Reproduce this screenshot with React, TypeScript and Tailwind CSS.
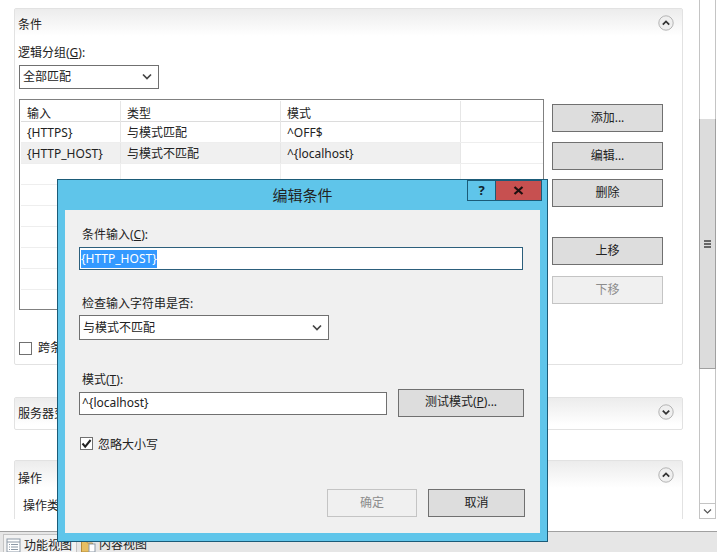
const rows = [
  { input: '{HTTPS}', type: '与模式匹配', pattern: '^OFF$' },
  { input: '{HTTP_HOST}', type: '与模式不匹配', pattern: '^{localhost}', active: true },
];

function Chevron({ up }: { up?: boolean }) {
  return (
    <svg width="16" height="16" viewBox="0 0 16 16" className="shrink-0">
      <circle cx="8" cy="8" r="7.2" fill="#efefef" stroke="#b4b4b4" />
      <path d={up ? 'M4.8 9.6 8 6.4l3.2 3.2' : 'M4.8 6.6 8 9.8l3.2-3.2'} fill="none" stroke="#333" strokeWidth="1.8" />
    </svg>
  );
}

function SelectBox({ label, className }: { label: string; className: string }) {
  return (
    <div className={`flex items-center justify-between bg-white border border-[#707070] pl-[3px] pr-[6px] ${className}`}>
      <span>{label}</span>
      <svg width="10" height="8" viewBox="0 0 10 8">
        <path d="M1 1.5 5 5.5l4-4" fill="none" stroke="#444" strokeWidth="1.7" />
      </svg>
    </div>
  );
}

function Btn({ children, className, disabled }: { children: React.ReactNode; className: string; disabled?: boolean }) {
  return (
    <div
      className={`flex items-center justify-center border ${
        disabled ? 'bg-[#f0f0f0] border-[#c4c4c4] text-[#8c8c8c]' : 'bg-[#dddddd] border-[#707070] text-[#222]'
      } ${className}`}
    >
      {children}
    </div>
  );
}

function Panel({ title, titleClass, className, children, up }: { title: string; titleClass: string; className: string; children?: React.ReactNode; up?: boolean }) {
  return (
    <section className={`border border-[#e2e2e2] rounded-[2px] ${className}`}>
      <div className="flex items-center justify-between h-[27px] pl-[3px] pr-[8px] bg-gradient-to-b from-[#ececec] to-white">
        <span className={titleClass}>{title}</span>
        <Chevron up={up} />
      </div>
      {children}
    </section>
  );
}

function ConditionTable() {
  const cell = 'pl-[6px] border-r border-[#e6e6e6] flex items-center';
  return (
    <div className="w-[525px] h-[211px] border border-[#808080] pt-[1px] pl-[1px] bg-white overflow-hidden">
      <div className="grid grid-cols-[100px_160px_180px_1fr] h-[21px] border-b border-[#dcdcdc]">
        <div className={`${cell} pt-[4px]`}>输入</div>
        <div className={`${cell} pt-[4px]`}>类型</div>
        <div className={`${cell} pt-[4px]`}>模式</div>
        <div />
      </div>
      {rows.map((r) => (
        <div key={r.input} className="grid grid-cols-[100px_160px_180px_1fr] h-[21px] border-b border-[#eeeeee]">
          <div className={`${cell} pt-[2px] ${r.active ? 'bg-[#f0f0f0]' : ''}`}>{r.input}</div>
          <div className={`${cell} pt-[2px] ${r.active ? 'bg-[#f0f0f0]' : ''}`}>{r.type}</div>
          <div className={`${cell} pt-[2px] ${r.active ? 'bg-[#f0f0f0]' : ''}`}>{r.pattern}</div>
          <div />
        </div>
      ))}
      {[0, 1, 2, 3, 4, 5].map((i) => (
        <div key={i} className="grid grid-cols-[100px_160px_180px_1fr] h-[21px] border-b border-[#eeeeee]">
          <div className="border-r border-[#eeeeee]" />
          <div className="border-r border-[#eeeeee]" />
          <div className="border-r border-[#eeeeee]" />
          <div />
        </div>
      ))}
    </div>
  );
}

function EditDialog() {
  return (
    <div className="absolute left-[57px] top-[179px] w-[491px] h-[363px] border border-[#1b5b78] bg-[#5fc5ea]">
      <div className="relative h-[30px] flex items-center justify-center text-[15px] text-[#222]">
        编辑条件
        <div className="absolute top-0 right-[5px] flex h-[21px]">
          <div className="w-[29px] border border-[#1b5b78] flex items-center justify-center text-[13px] font-bold text-[#10222c]">?</div>
          <div className="w-[46px] border border-l-0 border-[#1b5b78] bg-[#c75050] flex items-center justify-center">
            <svg width="11" height="9" viewBox="0 0 11 9">
              <path d="M1.5 1 9.5 8M9.5 1 1.5 8" fill="none" stroke="#1c1010" strokeWidth="2.2" />
            </svg>
          </div>
        </div>
      </div>
      <div className="ml-[7px] w-[475px] h-[323px] bg-[#f0f0f0] pt-[17px]">
        <div className="pl-[17px] h-[16px] leading-[16px]">条件输入(<u>C</u>):</div>
        <div className="ml-[14px] mt-[4px] w-[444px] h-[23px] bg-white border border-[#2c5f7c] pl-[1px] flex items-center">
          <span className="bg-[#3399ff] text-white h-[18px] leading-[18px]">{'{HTTP_HOST}'}</span>
        </div>
        <div className="pl-[17px] mt-[26px] h-[16px] leading-[16px]">检查输入字符串是否:</div>
        <SelectBox label="与模式不匹配" className="ml-[14px] mt-[3px] w-[250px] h-[25px]" />
        <div className="pl-[17px] mt-[32px] h-[16px] leading-[16px]">模式(<u>T</u>):</div>
        <div className="ml-[14px] mt-[1px] flex items-center gap-[11px]">
          <div className="w-[308px] h-[23px] bg-white border border-[#707070] pl-[2px] flex items-center">{'^{localhost}'}</div>
          <Btn className="w-[126px] h-[28px] pb-[2px]">测试模式(<u>P</u>)...</Btn>
        </div>
        <div className="ml-[15px] mt-[20px] flex items-center gap-[5px] h-[13px]">
          <div className="w-[13px] h-[13px] bg-white border border-[#707070] flex items-center justify-center">
            <svg width="11" height="11" viewBox="0 0 11 11">
              <path d="M1.5 5.5 4.2 8.6 9.6 2" fill="none" stroke="#222" strokeWidth="2" />
            </svg>
          </div>
          <span className="pt-[2px]">忽略大小写</span>
        </div>
        <div className="mt-[39px] pr-[15px] flex justify-end gap-[11px]">
          <Btn disabled className="w-[90px] h-[28px]">确定</Btn>
          <Btn className="w-[97px] h-[28px]">取消</Btn>
        </div>
      </div>
    </div>
  );
}

function Scrollbar() {
  return (
    <div className="ml-[16px] w-[17px] h-[519px] border-x border-[#c4c4c4] flex flex-col">
      <div className="h-[119px]" />
      <div className="h-[250px] -ml-[1px] w-[17px] bg-[#dcdcdc] border-x border-b border-[#a0a0a0] flex flex-col items-center justify-center gap-[1px]">
        <div className="w-[7px] h-[2px] bg-[#666]" />
        <div className="w-[7px] h-[2px] bg-[#666]" />
        <div className="w-[7px] h-[2px] bg-[#666]" />
      </div>
      <div className="flex-1" />
      <div className="h-[16px] border-y border-[#c4c4c4] flex items-center justify-center">
        <svg width="9" height="7" viewBox="0 0 9 7">
          <path d="M1 1.5 4.5 5 8 1.5" fill="none" stroke="#555" strokeWidth="1.2" />
        </svg>
      </div>
    </div>
  );
}

function StatusTabs() {
  return (
    <div className="h-[21px] border-t border-[#a0a0a0] bg-[#e6e6e6] flex items-end pl-[3px] overflow-hidden">
      <div className="w-[74px] h-[18px] bg-[#f2f2f2] border-x border-t border-[#c4c4c4] flex items-center pl-[2px] pt-[4px] gap-[3px]">
        <svg width="15" height="15" viewBox="0 0 15 15" className="shrink-0">
          <rect x="1" y="1" width="13" height="13" fill="#fff" stroke="#8d99a6" />
          <path d="M1 4h13M5 6.5h7M5 9h7M5 11.5h7M3 6.5h1M3 9h1M3 11.5h1" stroke="#8d99a6" />
        </svg>
        <span>功能视图</span>
      </div>
      <div className="h-[18px] flex items-center pl-[4px] pt-[4px] gap-[3px]">
        <svg width="15" height="15" viewBox="0 0 15 15" className="shrink-0">
          <path d="M0.5 3.5h5l1 1.5h5v9h-11z" fill="#e8bf62" stroke="#b58c3a" />
          <rect x="8" y="6" width="6" height="8" fill="#fff" stroke="#8d99a6" />
        </svg>
        <span>内容视图</span>
      </div>
    </div>
  );
}

export default function App() {
  return (
    <div className="relative w-[717px] h-[552px] overflow-hidden bg-white flex flex-col text-[12px] text-[#222] font-['Noto_Sans','Noto_Sans_CJK_SC',sans-serif]">
      <div className="flex-1 flex min-h-0">
        <main className="w-[683px] h-[519px] overflow-hidden pl-[14px] pt-[8px] flex flex-col shrink-0">
          <Panel title="条件" titleClass="pt-[4px]" up className="h-[357px] shrink-0">
            <div className="pl-[3px] mt-[9px] h-[16px] leading-[16px]">逻辑分组(<u>G</u>):</div>
            <SelectBox label="全部匹配" className="ml-[4px] mt-[4px] w-[140px] h-[24px]" />
            <div className="ml-[4px] mt-[10px] flex gap-[8px]">
              <ConditionTable />
              <div className="mt-[5px] flex flex-col">
                <Btn className="w-[111px] h-[28px]">添加...</Btn>
                <Btn className="w-[111px] h-[28px] mt-[10px]">编辑...</Btn>
                <Btn className="w-[111px] h-[28px] mt-[9px]">删除</Btn>
                <Btn className="w-[111px] h-[28px] mt-[30px]">上移</Btn>
                <Btn disabled className="w-[111px] h-[28px] mt-[11px]">下移</Btn>
              </div>
            </div>
            <div className="ml-[4px] mt-[29px] flex items-center gap-[6px]">
              <div className="w-[13px] h-[13px] bg-white border border-[#707070]" />
              <span>跨条件跟踪捕获组</span>
            </div>
          </Panel>
          <Panel title="服务器变量" titleClass="pt-[4px]" className="h-[33px] mt-[32px] shrink-0" />
          <Panel title="操作" titleClass="pt-[8px]" up className="h-[80px] mt-[30px] shrink-0">
            <div className="pl-[8px] mt-[9px]">操作类型(<u>Y</u>):</div>
          </Panel>
        </main>
        <Scrollbar />
      </div>
      <StatusTabs />
      <EditDialog />
    </div>
  );
}
